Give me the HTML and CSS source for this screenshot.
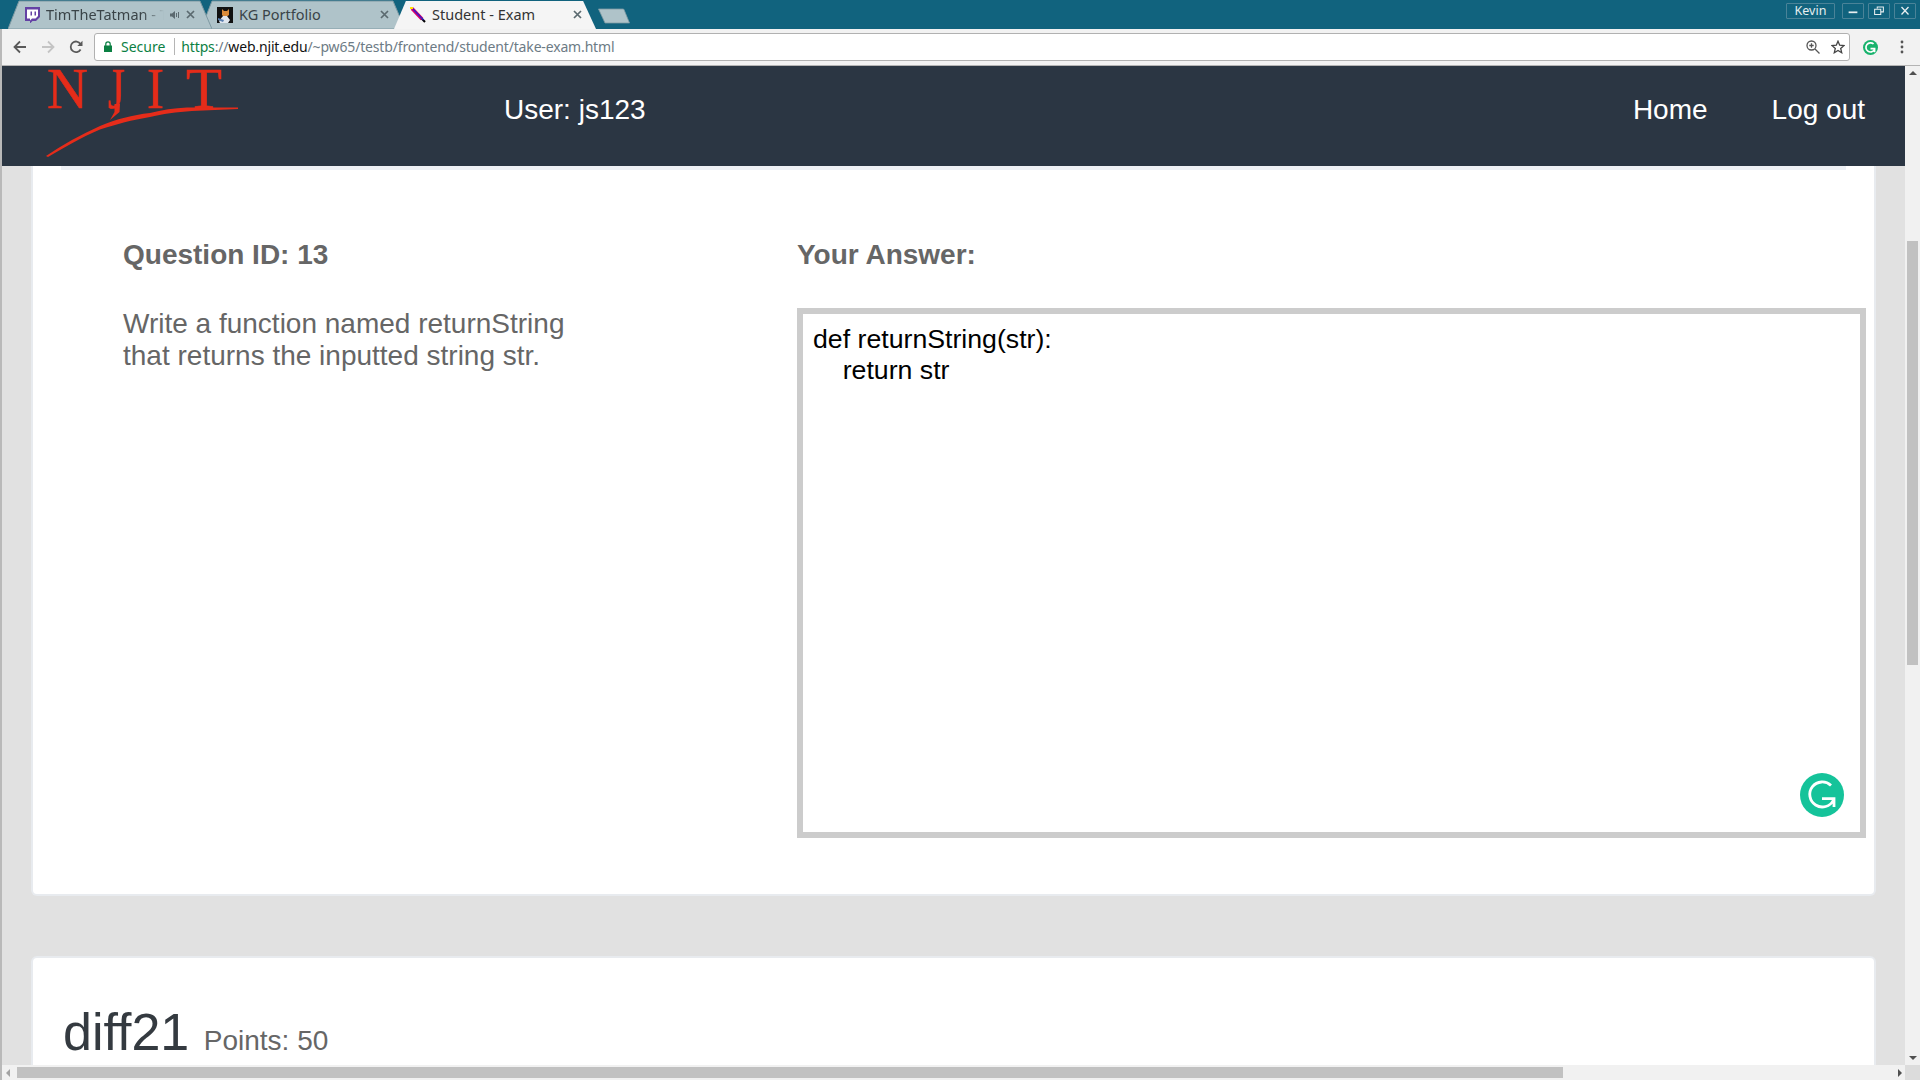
FILE: index.html
```html
<!DOCTYPE html>
<html lang="en">
<head>
<meta charset="utf-8">
<title>Student - Exam</title>
<link rel="stylesheet" href="styles.css">
</head>
<body>
<div class="window">
  <header class="tabstrip">
    <div class="tab tab-first">
      <svg class="tab-shape" viewBox="0 0 204 28" preserveAspectRatio="none"><path class="shape-idle" d="M0 28 L11 1 H192 L204 28 Z"/></svg>
      <svg class="favicon" viewBox="0 0 16 16"><path fill="#6441a4" d="M1 0H16V10L12 14H8.500L6 16.500V14H1Z"/><path fill="#fff" d="M3 2.500H14V9L11.500 11.500H8L6 13.500V11.500H3Z"/><path fill="#6441a4" d="M6.500 4.500H8V8.500H6.500ZM10.500 4.500H12V8.500H10.500Z"/></svg>
      <span class="tab-title fade">TimTheTatman - T</span>
      <svg class="speaker" viewBox="0 0 10 10"><path fill="#5b6a70" d="M0 3.500H2L5 1V9L2 6.500H0Z"/><path fill="none" stroke="#5b6a70" d="M6.500 3V7M8.500 2V8"/></svg>
      <svg class="close" viewBox="0 0 9 9"><path d="M1 1L8 8M8 1L1 8"/></svg>
    </div>
    <div class="tab tab-second">
      <svg class="tab-shape" viewBox="0 0 204 28" preserveAspectRatio="none"><path class="shape-idle" d="M0 28 L11 1 H192 L204 28 Z"/></svg>
      <svg class="favicon" viewBox="0 0 16 16"><rect width="16" height="16" fill="#111"/><path fill="#d98b3a" d="M5 2L7 4H10L12 2L12 8L9 10H7L5 8Z"/><path fill="#dfe6ee" d="M2 14L6 9H10L13 13L11 16H3Z"/><path fill="#5a7fb0" d="M1 11L7 13L6 15L1 13Z"/></svg>
      <span class="tab-title">KG Portfolio</span>
      <svg class="close" viewBox="0 0 9 9"><path d="M1 1L8 8M8 1L1 8"/></svg>
    </div>
    <div class="tab tab-active">
      <svg class="tab-shape" viewBox="0 0 204 29" preserveAspectRatio="none"><path class="shape-active" d="M0 29 L12 1 H191 L204 29 Z"/></svg>
      <svg class="favicon" viewBox="0 0 16 16"><path fill="none" stroke="#000" stroke-width="2" d="M4 3.500L15 15"/><path fill="none" stroke="#d6006e" stroke-width="3.400" d="M2 1.500L12 12"/><path fill="none" stroke="#2a1fd0" stroke-width="1.100" d="M3 2L13.500 13"/><path fill="#ffe800" d="M0 0H3V2H0Z"/></svg>
      <span class="tab-title">Student - Exam</span>
      <svg class="close" viewBox="0 0 9 9"><path d="M1 1L8 8M8 1L1 8"/></svg>
    </div>
    <svg class="new-tab" viewBox="0 0 32 16"><path d="M0.500 1 H25 a1 1 0 0 1 1 .6 L31.500 15 H7 Z"/></svg>
    <div class="window-controls">
      <span class="win-user">Kevin</span>
      <span class="win-btn"><svg viewBox="0 0 22 16"><path d="M6 9.500H16" stroke-width="2"/></svg></span>
      <span class="win-btn"><svg viewBox="0 0 22 16"><path d="M9 5V3.500H16V9H13M6 6H13V12H6Z" stroke-width="1.200"/></svg></span>
      <span class="win-btn"><svg viewBox="0 0 22 16"><path d="M7 3.500L15 12M15 3.500L7 12" stroke-width="1.500"/></svg></span>
    </div>
  </header>

  <div class="lower">
    <div class="toolbar">
      <svg class="tool-icon back" viewBox="0 0 14 14"><path d="M13 7H2M7 1.500L1.500 7L7 12.500"/></svg>
      <svg class="tool-icon forward" viewBox="0 0 14 14"><path d="M1 7H12M7 1.500L12.500 7L7 12.500"/></svg>
      <svg class="tool-icon reload" viewBox="0 0 14 14"><path d="M11.600 9.500A5.300 5.300 0 1 1 11.500 4"/><path class="solid" d="M13.500 0.800V6H8.300Z"/></svg>
      <div class="omnibox">
        <svg class="lock" viewBox="0 0 8 11"><path fill="#0b8043" d="M0 4.500H8V11H0Z"/><path fill="none" stroke="#0b8043" stroke-width="1.200" d="M1.800 5V3A2.200 2.200 0 0 1 6.200 3V5"/></svg>
        <span class="secure">Secure</span>
        <span class="omni-sep"></span>
        <span class="url"><span class="url-scheme">https</span><span>://</span><span class="url-host">web.njit.edu</span><span>/~pw65/testb/frontend/student/take-exam.html</span></span>
        <svg class="omni-zoom" viewBox="0 0 14 14"><circle cx="5.500" cy="5.500" r="4.500"/><path d="M9 9L13.500 13.500M3.300 5.500H7.700M5.500 3.300V7.700"/></svg>
        <svg class="omni-star" viewBox="0 0 14 14"><path d="M7 1.200L8.700 5.200L13 5.600L9.700 8.400L10.700 12.700L7 10.400L3.300 12.700L4.300 8.400L1 5.600L5.300 5.200Z"/></svg>
      </div>
      <svg class="ext-grammarly" viewBox="0 0 44 44"><circle cx="22" cy="22" r="22"/><path d="M31 11.500A13.500 13.500 0 1 0 33.500 29M22 25.500H34V36" /></svg>
      <svg class="chrome-menu" viewBox="0 0 4 14"><circle cx="2" cy="2" r="1.400"/><circle cx="2" cy="7" r="1.400"/><circle cx="2" cy="12" r="1.400"/></svg>
    </div>

    <div class="viewport">
      <div class="page">
        <nav class="navbar">
          <svg class="logo" viewBox="0 0 240 100">
            <text x="45" y="42" textLength="41" lengthAdjust="spacingAndGlyphs">N</text>
            <text x="106" y="42" textLength="17" lengthAdjust="spacingAndGlyphs">J</text>
            <text x="145" y="42" textLength="17" lengthAdjust="spacingAndGlyphs">I</text>
            <text x="184" y="42" textLength="36" lengthAdjust="spacingAndGlyphs">T</text>
            <path class="swoosh" d="M44 90 C60 79 78 69 98 60 C115 53 130 49 148 47 C160 44 172 42 185 41.500 L236 41.500 L236 43 L190 45 C175 46 160 48 148 51 C130 54 115 58 98 63.500 C78 72 62 82 46 91Z"/>
            <path class="j-tail" d="M108 54L112.500 46L112.500 38L118 38L117.500 46Z"/>
          </svg>
          <span class="nav-user">User: js123</span>
          <a class="nav-link nav-home">Home</a>
          <a class="nav-link">Log out</a>
        </nav>
        <main class="content">
          <section class="card card-question">
            <div class="card-strip"></div>
            <div class="question-grid">
              <h3 class="col-heading">Question ID: 13</h3>
              <h3 class="col-heading">Your Answer:</h3>
              <p class="prompt">Write a function named returnString that returns the inputted string str.</p>
              <div class="answer-wrap">
                <textarea class="answer" readonly spellcheck="false">def returnString(str):
    return str</textarea>
                <svg class="grammarly" viewBox="0 0 44 44"><circle cx="22" cy="22" r="22"/><path d="M31 12.500A12.500 12.500 0 1 0 33.500 27M22 25.700H34V34"/></svg>
              </div>
            </div>
          </section>
          <section class="card card-next">
            <div class="next-head">
              <h2 class="next-title">diff21</h2>
              <span class="next-points">Points: 50</span>
            </div>
          </section>
        </main>
      </div>
      <div class="vbar">
        <span class="arrow arrow-up"></span>
        <span class="vthumb"></span>
        <span class="arrow arrow-down"></span>
      </div>
      <div class="hbar">
        <span class="arrow arrow-left"></span>
        <span class="hthumb"></span>
        <span class="arrow arrow-right"></span>
      </div>
      <div class="corner"></div>
    </div>
  </div>
</div>
</body>
</html>
```

FILE: styles.css
```css
* { box-sizing: border-box; }
html, body { margin: 0; height: 100%; overflow: hidden; }
body { font-family: "Liberation Sans", Arial, sans-serif; background: #e1e1e1; }

.window { height: 1080px; width: 1920px; display: flex; flex-direction: column; overflow: hidden; }

/* tab strip */
.tabstrip { height: 29px; flex: none; background: #11637e; display: flex; align-items: flex-start; padding-left: 8px; position: relative; }
.tab { position: relative; width: 204px; height: 29px; margin-right: -11px; display: flex; align-items: center; font: 14.500px "Noto Sans", "Open Sans", sans-serif; color: #3a4448; flex: none; }
.tab-shape { position: absolute; left: 0; top: 0; width: 100%; height: 100%; }
.shape-idle { fill: #afc3c9; stroke: #7f9aa3; stroke-width: 1; vector-effect: non-scaling-stroke; }
.shape-active { fill: #f5f5f5; }
.tab-active { z-index: 2; color: #333; width: 202px; }
.tab-first { z-index: 1; }
.favicon { position: relative; width: 16px; height: 16px; margin-left: 16px; flex: none; }
.tab-title { position: relative; margin-left: 6px; margin-bottom: 2px; white-space: nowrap; flex: 1; overflow: hidden; line-height: 20px; }
.tab-first .tab-title { flex: none; width: 118px; }
.fade { color: #3a4448; -webkit-mask-image: linear-gradient(to right, #000 82%, transparent); mask-image: linear-gradient(to right, #000 82%, transparent); }
.speaker { position: relative; width: 10px; height: 10px; margin-left: 6px; flex: none; }
.close { position: relative; width: 9px; height: 9px; margin-left: 6px; margin-right: 14px; flex: none; fill: none; stroke: #5b6a70; stroke-width: 1.700; }
.tab-second .close { margin-right: 16px; }
.new-tab { width: 32px; height: 16px; margin: 8px 0 0 13px; flex: none; position: relative; z-index: 0; }
.new-tab path { fill: #afc3c9; stroke: #7f9aa3; stroke-width: 0.800; }
.window-controls { margin-left: auto; display: flex; gap: 4px; padding: 3px 4px 0 0; align-items: flex-start; }
.win-user { width: 49px; height: 16px; border: 1px solid #4a8398; border-radius: 1px; font: 12.500px/14px "Noto Sans", sans-serif; color: #e8eef0; text-align: center; margin-right: 3px; }
.win-btn { width: 22px; height: 16px; border: 1px solid #4a8398; border-radius: 1px; display: flex; }
.win-btn svg { width: 100%; height: 100%; fill: none; stroke: #e8eef0; }

/* toolbar */
.lower { flex: 1; min-height: 0; display: flex; flex-direction: column; border-left: 2px solid #b9b9b9; }
.toolbar { height: 37px; flex: none; background: #f2f2f2; display: flex; align-items: center; position: relative; border-bottom: 1px solid #b4b4b4; }
.tool-icon { width: 14px; height: 14px; flex: none; fill: none; stroke-width: 1.800; }
.back { margin-left: 11px; stroke: #5a5a5a; }
.forward { margin-left: 14px; stroke: #c4c4c4; }
.reload { margin-left: 14px; stroke: #5a5a5a; }
.reload .solid { fill: #5a5a5a; stroke: none; }
.omnibox { margin-left: 11px; width: 1756px; height: 28px; background: #fff; border: 1px solid #b1b1b1; border-radius: 3px; display: flex; align-items: center; font: 14px "Noto Sans", sans-serif; flex: none; padding-bottom: 1px; }
.lock { width: 8px; height: 11px; margin-left: 9px; flex: none; }
.secure { color: #0b8043; margin-left: 9px; }
.omni-sep { width: 1px; height: 17px; background: #b5b5b5; margin: 0 6px 0 9px; }
.url { color: #6d7b85; white-space: nowrap; flex: 1; letter-spacing: -0.160px; }
.url-scheme { color: #0b8043; }
.url-host { color: #111; }
.omni-zoom { width: 14px; height: 14px; fill: none; stroke: #555; stroke-width: 1.300; flex: none; }
.omni-star { width: 14px; height: 14px; fill: none; stroke: #444; stroke-width: 1.300; margin: 0 4.500px 0 11px; flex: none; }
.ext-grammarly { width: 15px; height: 15px; margin-left: 12.500px; flex: none; }
.ext-grammarly circle { fill: #18b36d; }
.ext-grammarly path { fill: none; stroke: #fff; stroke-width: 5; }
.chrome-menu { width: 4px; height: 14px; margin-left: 22.700px; fill: #555; flex: none; }

/* viewport + scrollbars */
.viewport { flex: 1; min-height: 0; display: grid; grid-template-columns: 1fr 15px; grid-template-rows: 1fr 15px; }
.page { min-width: 0; min-height: 0; display: flex; flex-direction: column; background: #e1e1e1; }

.navbar { height: 100px; flex: none; background: #2b3643; display: flex; align-items: flex-start; padding: 28px 40px 0 0; color: #fff; font-size: 28px; line-height: 32px; position: relative; }
.logo { width: 240px; height: 100px; margin-top: -28px; margin-right: 262px; flex: none; overflow: visible; }
.logo text { font-family: "Liberation Serif", serif; font-size: 56px; fill: #e52c1a; stroke: #e52c1a; stroke-width: 0.500; }
.swoosh, .j-tail { fill: #e52c1a; }
.nav-home { margin-left: auto; margin-right: 64px; }

.content { padding: 0 29px; flex: 1; min-height: 0; overflow: hidden; }
.card { background: #fff; border: 2px solid #e8ebef; border-radius: 6px; }
.card-question { border-top: 0; border-radius: 0 0 6px 6px; padding-bottom: 56px; margin-bottom: 60px; }
.card-strip { height: 4px; background: #eef1f5; margin: 0 28px; }
.question-grid { display: grid; grid-template-columns: 674px 1fr; padding: 69px 8px 0 90px; color: #666; font-size: 28px; }
.col-heading { margin: 0 0 37px; font-size: 28px; line-height: 32px; font-weight: bold; color: #666; }
.prompt { margin: 0; line-height: 32px; max-width: 460px; }
.answer-wrap { position: relative; height: 530px; }
.answer { display: block; width: 100%; height: 100%; border: 6px solid #ccc; padding: 10px; margin: 0; resize: none; overflow: hidden; outline: none; background: #fff; color: #000; font: 26.700px/31px "Liberation Sans", Arial, sans-serif; white-space: pre-wrap; }
.grammarly { position: absolute; right: 22px; bottom: 21px; width: 44px; height: 44px; }
.grammarly circle { fill: #15c39a; }
.grammarly path { fill: none; stroke: #fff; stroke-width: 2.800; }

.card-next { height: 200px; padding: 46px 30px 0; }
.next-head { display: flex; align-items: baseline; gap: 14.500px; }
.next-title { margin: 0; font-size: 52px; line-height: 57px; font-weight: normal; color: #343a40; }
.next-points { font-size: 28px; color: #666; }

.vbar { background: #f1f1f1; display: flex; flex-direction: column; align-items: center; position: relative; }
.vthumb { width: 11px; height: 424px; background: #c1c1c1; margin-top: 166px; }
.hbar { background: #f1f1f1; display: flex; align-items: center; }
.hthumb { width: 1546px; height: 11px; background: #c1c1c1; margin-left: 7px; }
.corner { background: #dcdcdc; }
.arrow { width: 0; height: 0; border: 4px solid transparent; flex: none; }
.arrow-up { border-bottom-color: #505050; border-top-width: 0; margin-top: 5px; }
.arrow-down { border-top-color: #505050; border-bottom-width: 0; margin-top: auto; margin-bottom: 5px; }
.arrow-left { border-right-color: #a3a3a3; border-left-width: 0; margin-left: 4px; }
.arrow-right { border-left-color: #505050; border-right-width: 0; margin-left: auto; margin-right: 3px; }
```
